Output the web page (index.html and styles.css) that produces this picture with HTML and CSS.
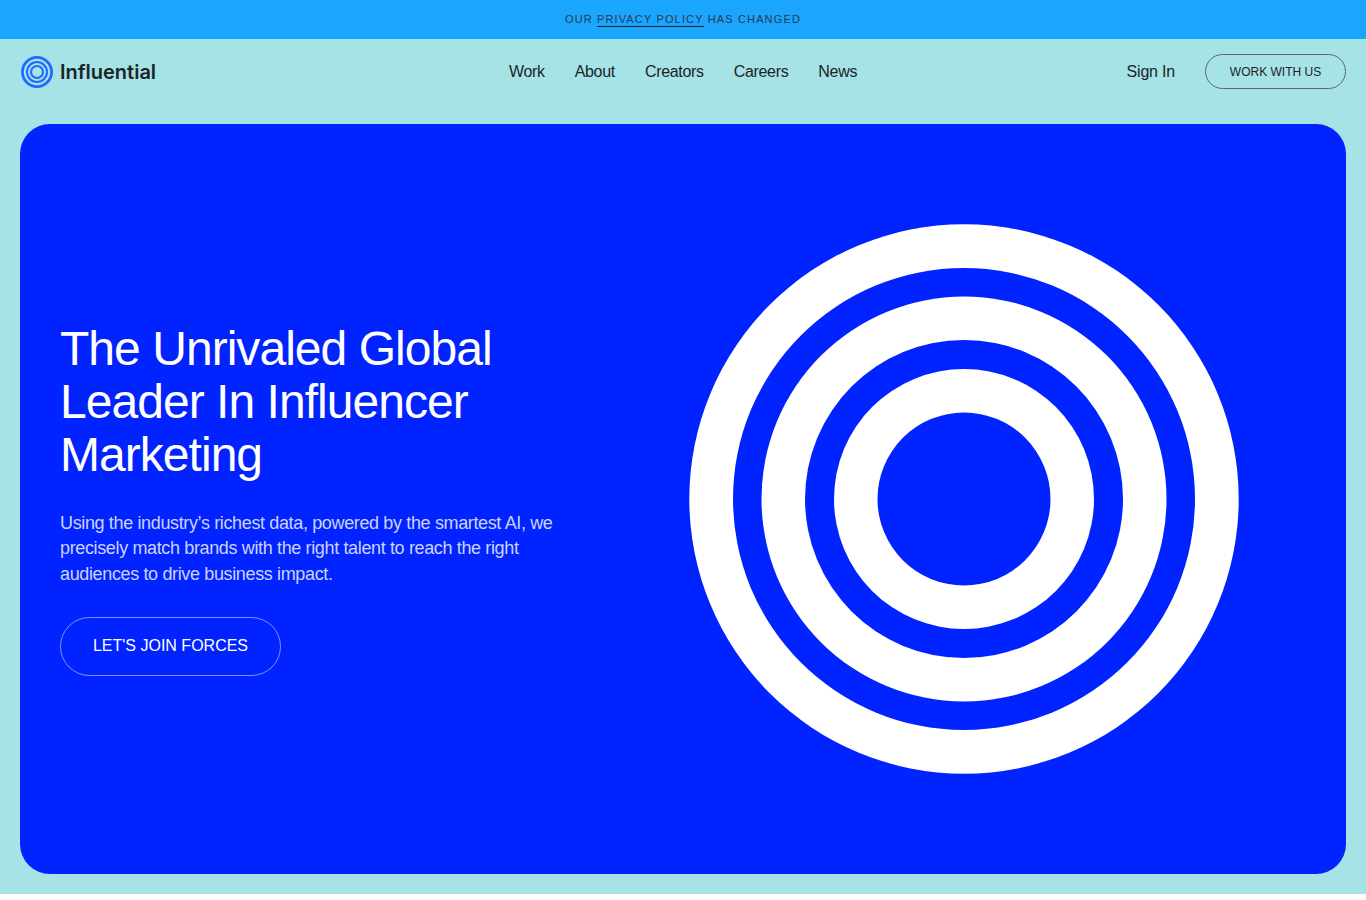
FILE: index.html
```html
<!DOCTYPE html>
<html lang="en">
<head>
    <meta charset="UTF-8">
    <meta name="viewport" content="width=device-width, initial-scale=1.0">
    <title>Influential</title>
    <link rel="stylesheet" href="styles.css">
</head>
<body>
    <div class="notice">
        OUR <a href="#">PRIVACY POLICY</a> HAS CHANGED
    </div>
    <div class="page">
        <header class="topbar">
            <a class="logo" href="#">
                <svg class="logo-mark" viewBox="0 0 32 32" fill="none" stroke="#1f6bff">
                    <circle cx="16" cy="16" r="14.6" stroke-width="2.8"/>
                    <circle cx="16" cy="16" r="10" stroke-width="2.1"/>
                    <circle cx="16" cy="16" r="6" stroke-width="2.1"/>
                </svg>
                <span class="logo-name">Influential</span>
            </a>
            <nav class="menu">
                <a href="#">Work</a>
                <a href="#">About</a>
                <a href="#">Creators</a>
                <a href="#">Careers</a>
                <a href="#">News</a>
            </nav>
            <div class="actions">
                <a class="signin" href="#">Sign In</a>
                <a class="work-btn" href="#">WORK WITH US</a>
            </div>
        </header>
        <section class="hero">
            <div class="hero-text">
                <h1>The Unrivaled Global Leader In Influencer Marketing</h1>
                <p>Using the industry’s richest data, powered by the smartest AI, we precisely match brands with the right talent to reach the right audiences to drive business impact.</p>
                <a class="join-btn" href="#">LET'S JOIN FORCES</a>
            </div>
            <svg class="rings" viewBox="0 0 550 550">
                <circle cx="275" cy="275" r="274.7" fill="#fff"/>
                <circle cx="275" cy="275" r="231" fill="#0023ff"/>
                <circle cx="275" cy="275" r="202.5" fill="#fff"/>
                <circle cx="275" cy="275" r="159" fill="#0023ff"/>
                <circle cx="275" cy="275" r="130" fill="#fff"/>
                <circle cx="275" cy="275" r="86.5" fill="#0023ff"/>
            </svg>
        </section>
    </div>
</body>
</html>
```

FILE: styles.css
```css
* {
    margin: 0;
    padding: 0;
    box-sizing: border-box;
}
body {
    background: #fff;
    font-family: 'Liberation Sans', Arial, sans-serif;
    color: #1c2327;
}
a {
    color: inherit;
    text-decoration: none;
}
.notice {
    height: 39px;
    padding-bottom: 1px;
    display: flex;
    align-items: center;
    justify-content: center;
    gap: 4px;
    background: #1aa5ff;
    color: #2a3a4a;
    font-size: 11px;
    letter-spacing: 1.15px;
}
.notice a {
    border-bottom: 1px solid #1c2327;
    line-height: 13px;
    margin-top: 1px;
}
.page {
    background: #a5e3e6;
    padding: 0 20px 20px;
}
.topbar {
    height: 85px;
    padding-bottom: 20px;
    display: grid;
    grid-template-columns: 1fr auto 1fr;
    align-items: center;
}
.logo {
    display: flex;
    align-items: center;
    gap: 7px;
}
.logo-mark {
    width: 32px;
    height: 32px;
    margin-left: 1px;
}
.logo-name {
    font-family: 'Inter', sans-serif;
    font-size: 20px;
    font-weight: 600;
    color: #1c2327;
    font-variant-ligatures: none;
}
.menu {
    display: flex;
    gap: 30px;
    font-size: 16px;
    letter-spacing: -0.32px;
}
.actions {
    display: flex;
    justify-content: flex-end;
    align-items: center;
    gap: 30px;
}
.signin {
    font-size: 16px;
    letter-spacing: -0.2px;
}
.work-btn {
    width: 141px;
    height: 35px;
    display: flex;
    align-items: center;
    justify-content: center;
    border: 1px solid #5c6a6e;
    border-radius: 18px;
    font-size: 12px;
}
.hero {
    height: 750px;
    background: #0023ff;
    border-radius: 30px;
    padding: 0 107px 0 40px;
    display: flex;
    align-items: center;
    justify-content: space-between;
}
.hero-text {
    width: 510px;
}
.hero h1 {
    color: #fff;
    font-size: 48px;
    font-weight: 400;
    line-height: 53px;
    letter-spacing: -0.96px;
}
.hero p {
    margin-top: 29.7px;
    color: #ccd3ff;
    font-size: 18px;
    line-height: 25.5px;
    letter-spacing: -0.36px;
}
.join-btn {
    display: inline-flex;
    align-items: center;
    justify-content: center;
    margin-top: 29.3px;
    width: 221px;
    height: 59px;
    border: 1px solid #8093ff;
    border-radius: 30px;
    color: #fff;
    font-size: 16px;
}
.rings {
    width: 550px;
    height: 550px;
}
```
